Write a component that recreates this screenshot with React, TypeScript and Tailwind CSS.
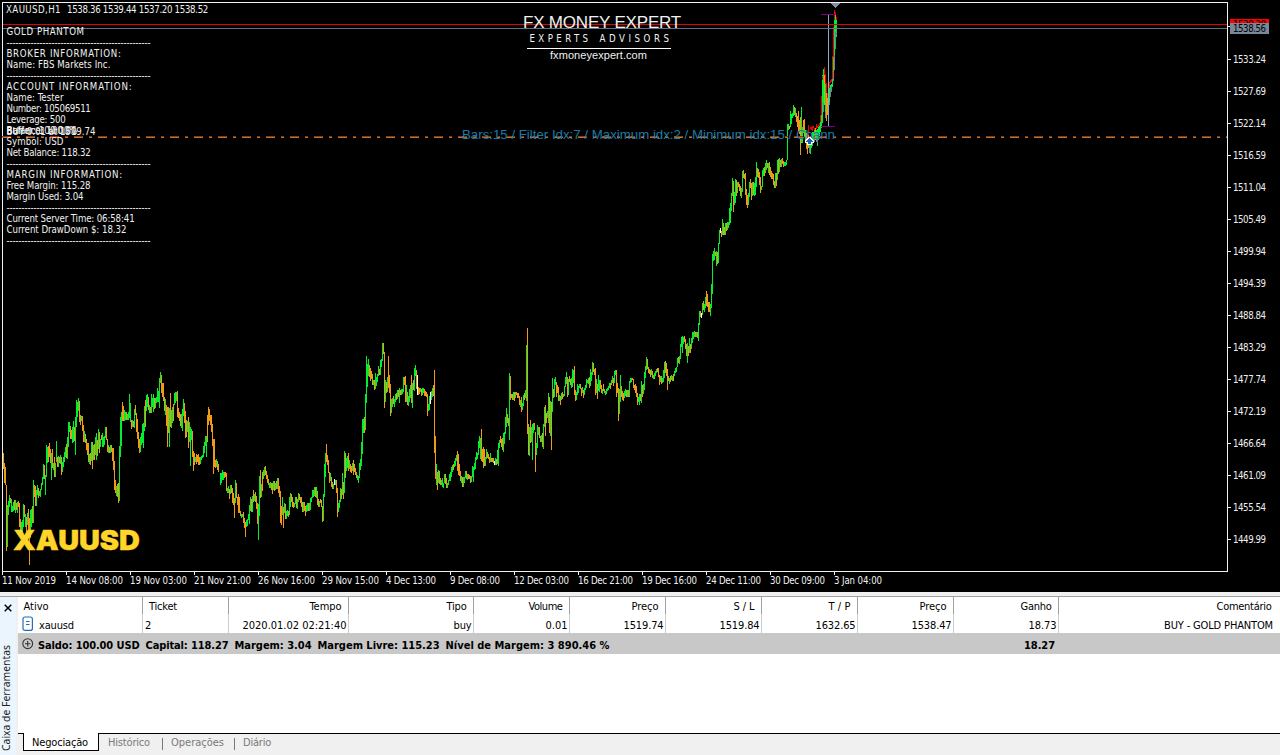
import { useLayoutEffect, useRef, useState } from "react";

const GREEN = "#00f030";
const ORANGE = "#f09a18";

/** Text whose tracking is adjusted so that it takes exactly `w` pixels. */
function Fit({ t, w, className = "" }: { t: string; w: number; className?: string }) {
  const ref = useRef<HTMLSpanElement>(null);
  const [ls, setLs] = useState(0);
  useLayoutEffect(() => {
    if (!ref.current) return;
    ref.current.style.letterSpacing = "0px";
    const natural = ref.current.getBoundingClientRect().width;
    const next = (w - natural) / t.length;
    ref.current.style.letterSpacing = next + "px";
    setLs(next);
  }, [t, w]);
  return (
    <span ref={ref} className={"inline-block self-start whitespace-pre " + className} style={{ letterSpacing: ls }}>
      {t}
    </span>
  );
}

/* Bars: colour, column, high, low, on a grid of thirds of a pixel. */
const series: { ox: number; oy: number; d: string }[] = [
  {
    ox: 0,
    oy: 360,
    d: `o10,279,326 o13,310,368 o16,321,375 o19,375,572 g22,435,560 g25,423,465 g28,405,440 o31,414,430 g34,416,455 g37,437,455 g40,425,452 o43,420,450 g46,420,458 o49,430,450 g52,425,458 o55,423,440 o58,430,500 o61,477,512 g64,487,520 g67,480,515 g70,432,500 o73,435,470 g76,462,500 o79,470,515 g82,458,495 o85,447,510 o88,475,614 g91,450,535 g94,447,500 o97,438,490 g100,360,490 o103,375,410 o106,378,437 g109,390,437 g112,375,405 o115,385,413 g118,393,408 g121,387,410 g124,368,390 g127,350,375 g130,312,358 o133,314,357 g136,345,405 g139,255,350 g142,262,308 o145,258,305 o148,249,290 o151,267,310 g154,280,360 o157,267,325 g160,310,330 o163,290,350 g166,308,350 g169,243,305 o172,290,320 g175,288,322 o178,290,308 g181,285,312 o184,290,345 g187,305,335 g190,290,320 g193,275,305 g196,262,290 o199,252,295 g202,232,296 g205,186,262 g208,186,215 o211,198,236 o214,210,236 g217,200,248 g220,184,245 o223,200,243 g226,170,284 g229,120,200 g232,125,172 g235,114,152 o238,122,185 o241,165,195 g244,168,182 o247,168,212 o250,195,247 g253,212,245 o256,222,250 o259,237,270 o262,250,284 o265,250,306 g268,282,312 o271,280,315 g274,247,303 o277,246,326 g280,255,300 o283,252,300 g286,232,284 g289,219,300 o292,240,288 g295,207,266 o298,217,280 g301,238,262 o304,225,240 g307,220,262 g310,232,262 g313,228,255 g316,201,235 o319,202,240 o322,237,275 g325,255,280 o328,262,280 g331,255,278 o334,255,276 o337,263,303 o340,264,330 o343,302,390 o346,360,400 g349,377,408 o352,372,410 o355,370,428 g358,258,422 g361,172,290 g364,155,258 o367,126,182 o370,137,183 g373,150,182 g376,157,180 o379,156,180 g382,162,180 g385,155,180 g388,102,175 g391,130,185 o394,180,208 g397,180,200 o400,182,202 g403,148,205 o406,136,165 o409,158,215 o412,178,236 o415,215,263 o418,237,280 g421,230,275 g424,218,255 g427,192,248 g430,190,265 g433,138,213 o436,120,200 g439,104,152 g442,103,140 o445,110,150 g448,135,160 o451,140,160 g454,102,158 g457,115,140 g460,102,155 o463,113,147 g466,115,145 g469,112,128 g472,85,125 g475,92,125 g478,55,143 g481,37,68 o484,45,98 o487,70,112 o490,70,122 o493,112,152 g496,118,165 o499,135,198 o502,142,262 o505,140,218 g508,145,262 o511,98,200 g514,150,204 g517,142,190 o520,132,182 g523,98,135 g526,97,130 g529,95,122 o532,93,172 o535,145,174 o538,155,182 o541,162,198 g544,162,203 g547,148,212 g550,117,167 o553,130,190 o556,152,233 o559,180,230 g562,182,215 o565,170,264 g568,187,245 g571,200,318 g574,208,240 o577,212,292 o580,272,333 o583,280,315 g586,290,305 o589,282,312 o592,284,306 o595,283,315 o598,292,315 g601,292,312 g604,287,300 g607,285,293 g610,258,291 g613,247,280 g616,228,258 g619,228,291 o622,164,247 o625,141,195 o628,147,183 o631,164,195 o634,165,217 o637,192,258 o640,237,341 o643,237,320 o646,300,325 g649,298,322 o652,302,330 o655,312,337 g661,340,375 g664,338,370 g667,330,360 g670,335,360 o673,337,355 o676,336,352 o679,338,392 g682,385,400 g685,378,400 o688,388,418 g691,376,402 o694,375,398 o697,385,430 o700,398,435 o703,413,474 g706,360,430 o709,370,415 o712,412,435 o715,402,460 o718,412,460`,
  },
  {
    ox: 220,
    oy: 330,
    d: `o61,543,558 g64,552,564 g67,552,560 o70,545,578 o73,565,595 o76,575,620 g79,570,590 g82,567,588 g85,552,570 g88,524,582 g91,502,542 o94,507,545 g97,498,545 o100,480,515 g103,492,512 o106,487,515 o109,498,537 o112,520,582 g115,522,629 g118,438,558 o121,420,505 g124,462,500 o127,426,482 g130,420,447 g133,412,437 o136,408,435 o139,422,447 o142,434,460 o145,447,465 g148,460,473 g151,457,473 o154,460,480 o157,458,492 g160,452,480 o163,452,482 g166,460,480 o169,453,478 g172,444,478 o175,444,490 o178,468,500 o181,484,580 o184,527,585 g187,500,555 o190,530,595 g193,520,550 o196,522,568 g199,542,567 g202,540,558 o205,542,562 g208,500,555 g211,488,530 o214,492,515 o217,500,530 o220,515,534 g223,518,530 g226,500,522 o229,500,533 g232,507,537 g235,489,515 o238,492,510 o241,500,518 o244,500,530 o247,515,545 g250,516,546 o253,516,542 o256,528,557 g259,524,546 g262,520,542 o265,520,542 g268,520,543 g271,503,540 g274,500,515 g277,480,504 g280,480,502 g283,471,498 o286,472,500 g289,472,505 o292,484,525 o295,507,532 g298,513,530 o301,507,520 o304,510,530 o307,528,576 g310,492,573 g313,402,502 g316,368,440 o319,342,395 o322,375,405 o325,390,430 o328,427,458 g331,428,453 o334,440,470 o337,455,477 g340,462,477 w343,447,465 g346,450,465 o349,450,488 o352,474,560 g355,520,545 g358,510,535 g361,475,517 o364,477,507 g367,430,495 o370,456,507 g373,363,490 o376,370,445 g379,383,423 g382,378,415 o385,370,423 g388,390,418 o391,402,425 o394,408,430 g397,398,422 o400,390,435 o403,402,425 o406,415,435 o409,425,445 g412,436,450 g415,437,458 g418,400,443 g421,387,420 g424,336,408 g427,268,372 g430,268,310 o433,262,310 g436,192,300 g439,78,218 g442,102,170 g445,86,138 o448,105,140 o451,115,152 o454,123,148 o457,132,164 g460,150,165 o463,150,180 g466,130,178 g469,140,168 g472,132,155 g475,108,138 o478,117,135 g481,90,135 g484,87,112 g487,39,92 o490,40,72 o493,66,234 g496,150,216 o499,155,190 g502,140,185 o505,78,175 o508,135,190 o511,162,258 g514,208,248 g517,205,230 o520,197,222 g523,208,232 g526,193,215 o529,190,210 g532,180,208 o535,180,200 g538,173,218 o541,180,195 g544,177,195 g547,177,193 g550,142,185 o553,140,165 o556,138,215 g559,165,215 o562,185,226 g565,198,228 g568,178,215 g571,165,205 o574,135,220 g577,158,234 o580,150,180 g583,115,183 g586,105,137 o589,120,178 w592,135,195 o595,172,195 o598,175,193 g601,173,187 o604,178,198 g607,175,195 g610,174,190 o613,177,197 o616,183,197 o619,187,200 o622,192,258 g625,222,243 g628,197,240 w631,185,222 g634,182,210 g637,174,200 o640,165,198 o643,120,368 o646,318,448 g649,402,465 o652,425,480 g655,420,458 o658,422,462 o661,445,465 g664,450,465 g667,445,472 g670,458,475 g673,432,460 o676,432,462 o679,445,473 g682,458,473 g685,450,465 g688,432,452 g691,427,453 g694,410,440 g697,405,425 o700,402,420 g703,392,410 g706,383,408 g709,375,392 o712,363,423 o715,372,435 o718,402,437`,
  },
  {
    ox: 420,
    oy: 310,
    d: `o121,483,512 g124,498,520 o127,500,530 g130,500,530 g133,500,518 g136,483,505 o139,483,508 g142,492,510 o145,492,508 o148,496,508 o151,498,518 g154,497,515 g157,468,500 g160,470,516 g163,458,480 g166,440,478 g169,426,450 g172,430,448 g175,392,435 g178,378,415 g181,384,448 o184,357,452 o187,417,455 o190,411,473 o193,416,468 g196,440,467 g199,417,448 o202,425,445 o205,432,448 o208,440,458 g211,430,455 o214,443,455 o217,444,457 o220,444,458 w223,453,465 g226,445,465 o229,448,465 g232,420,462 g235,400,467 g238,390,415 o241,378,400 o244,388,410 o247,385,420 g250,370,426 g253,365,402 g256,322,372 g259,294,350 o262,312,340 o265,323,348 g268,189,390 o271,198,270 o274,252,265 o277,253,270 g280,247,270 o283,245,273 g286,247,265 o289,246,255 o292,248,263 o295,248,264 o298,258,285 g301,270,290 o304,262,305 g307,278,300 g310,255,288 o313,248,270 g316,240,265 g319,105,272 o322,54,372 o325,342,435 g328,350,437 o331,330,400 g334,352,395 g337,343,450 g340,340,368 o343,339,360 o346,366,486 g349,400,435 g352,345,415 g355,352,375 o358,350,383 o361,378,395 g364,375,397 o367,369,412 g370,342,417 g373,290,352 o376,285,378 o379,308,340 g382,303,325 g385,249,340 o388,262,370 g391,272,378 o394,275,420 g397,204,305 o400,237,265 g403,207,260 g406,201,225 o409,216,262 o412,225,248 o415,232,272 g418,255,273 o421,258,285 g424,250,270 o427,246,267 g430,252,260 g433,228,258 g436,200,230 g439,186,222 o442,200,260 g445,207,255 o448,198,215 o451,206,225 g454,205,234 g457,177,232 g460,180,220 o463,168,255 o466,240,272 g469,245,270 g472,222,255 g475,228,250 g478,222,235 o481,222,237 o484,234,258 g487,232,250 o490,240,264 g493,234,255 g496,225,240 g499,208,235 g502,210,220 g505,203,222 o508,202,234 g511,177,228 g514,185,213 g517,156,195 o520,160,185 o523,177,195 o526,175,254 g529,207,248 o532,222,267 g535,195,243 g538,210,245 o541,210,237 o544,225,250 g547,237,252 o550,222,243 o553,237,250 g556,243,255 g559,237,252 g562,235,243 g565,228,240 g568,219,233 o571,219,237 g574,210,225 g577,198,220 o580,205,228 g583,183,220 g586,180,195 o589,180,260 o592,219,248 o595,235,333 g598,237,312 g601,195,275 o604,228,262 o607,243,270 o610,248,273 g613,243,265 g616,237,258 o619,240,262 g622,240,260 o625,240,262 g628,213,260 g631,205,218 g634,205,215 o637,204,210 o640,207,235 o643,225,240 o646,222,248 o649,228,262 o652,249,285 g655,262,275 g658,252,285 o661,252,273 g664,213,280 o667,225,262 g670,222,253 g673,186,240 g676,168,205 g679,141,180 o682,147,177 o685,172,190 o688,178,193 o691,180,200 g694,178,195 o697,182,203 g700,195,207 g703,190,207 g706,183,198 g709,178,190 o712,175,187 o715,173,200 o718,195,225`,
  },
  {
    ox: 620,
    oy: 140,
    d: `g121,708,725 o124,708,732 g127,715,730 g130,690,725 g133,665,713 o136,663,700 o139,670,708 o142,687,750 o145,708,722 g148,715,732 o151,708,725 g154,705,720 g157,708,722 o160,702,722 g163,692,708 g166,683,700 g169,680,695 g172,654,682 o175,651,670 g178,648,672 g181,612,658 g184,590,622 g187,588,640 g190,590,612 o193,588,607 o196,597,627 o199,612,648 g202,608,668 o205,618,648 g208,594,638 o211,612,640 g214,595,627 g217,577,608 g220,577,597 g223,573,590 o226,576,592 g229,576,590 o232,577,593 g235,548,603 g238,513,555 o241,513,530 w244,520,534 g247,490,525 o250,483,510 g253,492,516 g256,470,505 o259,453,497 o262,462,500 o265,486,515 o268,487,517 g271,492,528 g274,432,505 g277,342,462 g280,333,362 g283,324,360 o286,335,348 g289,333,378 o292,336,372 g295,308,370 g298,270,312 w301,264,278 o304,273,290 g307,237,285 o310,250,285 o313,262,285 g316,250,285 o319,250,273 g322,247,270 g325,245,265 g328,204,255 g331,190,250 g334,158,213 g337,114,168 o340,123,216 g343,155,195 g346,117,188 o349,120,168 g352,125,160 o355,125,140 o358,132,153 o361,138,167 g364,144,174 g367,93,157 o370,90,115 o373,103,117 o376,98,165 o379,147,195 o382,165,204 g385,160,195 g388,125,172 o391,117,145 o394,128,180 g397,126,168 o400,127,165 g403,130,168 g406,110,165 g409,66,140 o412,85,110 o415,87,115 o418,97,135 o421,110,158 g424,138,150 g427,90,142 g430,83,108 o433,80,107 g436,70,100 g439,60,90 o442,70,85 g445,70,98 o448,67,105 o451,80,112 o454,93,117 o457,100,117 o460,103,135 o463,122,143 g466,100,143 o469,100,137 g472,60,120 o475,57,102 g478,54,95 o481,60,80 g484,58,80 o487,54,72 o490,62,80 g493,66,78 g496,65,77 g499,60,75 g502,-48,60`,
  },
  {
    ox: 740,
    oy: 0,
    d: `g145,373,390 o148,377,388 g151,333,382 g154,342,372 g157,340,355 g160,315,348 o163,322,345 g166,323,350 o169,338,367 o172,348,380 o175,333,395 o178,360,402 o181,350,465 g184,322,430 g187,380,430 o190,360,400 o193,357,410 g196,390,420 o199,400,448 o202,400,462 o205,405,445 g208,420,455 g211,430,462 g214,400,445 g217,395,438 g220,395,425 g223,390,420 o226,385,420 g229,390,425 g232,388,438 g235,380,420 g238,378,410 g241,365,395 g244,330,385 s250,300,335 s256,335,355 r241,345,365 r244,288,345 r250,208,235 r256,222,255 r259,250,280 g247,225,370 g250,208,310 o253,222,315 g256,252,335 o259,278,362 o262,290,345 g265,285,330 g268,265,305 g271,255,270 g274,252,260 g277,225,260 g280,170,215 g283,60,165 g286,38,95 g289,55,110 r205,375,405 r211,381,388 r214,381,390 r217,378,392 r220,378,384 r223,384,390 r229,372,388 r232,378,384 r235,375,381 r238,370,378 r247,228,240 r253,201,225 r262,278,295 r265,258,290 r268,245,265 r271,240,250 r274,236,246 r277,168,238 r280,80,170 r283,30,60 r286,36,45 r289,50,60 s208,440,458 s223,405,425 s232,410,430 s229,415,425 s268,305,315 s271,270,290 s274,260,275 s280,215,242 s283,165,210 s286,95,146 s289,90,105`,
  },
];

const tint: Record<string, string> = { g: GREEN, o: ORANGE, w: "#ffffff", r: "#f00000", s: "#708090" };

const bars = series.flatMap(({ ox, oy, d }) =>
  d.split(" ").map((s) => {
    const [x, a, b] = s.slice(1).split(",").map(Number);
    const y0 = oy + Math.round(a / 3);
    const y1 = oy + Math.round(b / 3);
    return { x: ox + Math.floor(x / 3), y: y0, h: Math.max(1, y1 - y0), c: tint[s[0]] };
  }),
);

const prices = [
  "1533.24", "1527.69", "1522.14", "1516.59", "1511.04", "1505.49", "1499.94", "1494.39",
  "1488.84", "1483.29", "1477.74", "1472.19", "1466.64", "1461.09", "1455.54", "1449.99",
];

const times: [string, number][] = [
  ["11 Nov 2019", 54], ["14 Nov 08:00", 57], ["19 Nov 03:00", 57], ["21 Nov 21:00", 57],
  ["26 Nov 16:00", 57], ["29 Nov 15:00", 57], ["4 Dec 13:00", 50], ["9 Dec 08:00", 50],
  ["12 Dec 03:00", 55], ["16 Dec 21:00", 55], ["19 Dec 16:00", 55], ["24 Dec 11:00", 55],
  ["30 Dec 09:00", 55], ["3 Jan 04:00", 48],
];

const dashes = "-".repeat(48);
const info: [string, number][] = [
  ["GOLD PHANTOM", 78], [dashes, 144], ["BROKER INFORMATION:", 115], ["Name: FBS Markets Inc.", 104],
  [dashes, 144], ["ACCOUNT INFORMATION:", 126], ["Name: Tester", 57], ["Number: 105069511", 84],
  ["Leverage: 500", 59], ["Balance: 100.00", 70], ["Symbol: USD", 57], ["Net Balance: 118.32", 84],
  [dashes, 144], ["MARGIN INFORMATION:", 116.5], ["Free Margin: 115.28", 84], ["Margin Used: 3.04", 77],
  [dashes, 144], ["Current Server Time: 06:58:41", 128], ["Current DrawDown $: 18.32", 120], [dashes, 144],
];

function Chart() {
  return (
    <section className="relative h-[592px] w-full shrink-0 overflow-hidden bg-black text-[9.6px] text-[#f0f0f0]">
      <svg width="1280" height="592" viewBox="0 0 1280 592" className="block" shapeRendering="crispEdges">
        <path d="M2 2.5H1228M2.5 2V575M1227.5 2V572M2 571.5H1228" stroke="#f0f0f0" fill="none" />
        {prices.map((p, i) => (
          <g key={p}>
            <rect x="1228" y={59 + i * 32} width="3" height="1" fill="#f0f0f0" />
            <text x="1233" y={63 + i * 32} textLength="33" fill="#f0f0f0">{p}</text>
          </g>
        ))}
        {times.map(([t, w], i) => (
          <g key={t}>
            <rect x={2 + i * 64} y="572" width="1" height="3" fill="#f0f0f0" />
            <text x={2 + i * 64} y="584" textLength={w} fill="#f0f0f0">{t}</text>
          </g>
        ))}
        {bars.map((b, i) => (
          <rect key={i} x={b.x} y={b.y} width="1" height={b.h} fill={b.c} />
        ))}
        <path d="M828.5 14V126" stroke="#7eb0d0" />
        <path d="M821 14.5H835M821 126.5H835" stroke="#800080" />
        <path d="M831 3H840L835.5 8Z" fill="#8090a0" />
        <path d="M2 137.5H1227" stroke="#3cb043" strokeDasharray="9 6 3 6" />
        <path d="M2 136.5H1227" stroke="#ff0000" strokeDasharray="9 6 3 6" />
        <path d="M3 24.5H1227" stroke="#e60000" />
        <path d="M3 28.5H1227" stroke="#5f7480" />
        <rect x="1227" y="26" width="4" height="1" fill="#f0f0f0" />
        <rect x="1230" y="19" width="39" height="10" fill="#ff0000" />
        <text x="1233" y="28" textLength="33" fill="#000">1539.20</text>
        <rect x="1230" y="23" width="39" height="11" fill="#778899" />
        <text x="1233" y="32" textLength="33" fill="#000">1538.56</text>
        <text x="462" y="138.5" textLength="373" lengthAdjust="spacingAndGlyphs" fontSize="13" fill="#1c7ba6" className="font-['Liberation_Sans',sans-serif]">
          Bars:15 / Filter Idx:7 / Maximum idx:2 / Minimum idx:15 / Chann
        </text>
        <g fill="#fff">
          <rect x="808" y="137" width="3" height="1" />
          <rect x="807" y="138" width="5" height="1" />
          <rect x="806" y="139" width="7" height="1" />
          <rect x="805" y="140" width="9" height="3" />
          <rect x="807" y="143" width="5" height="2" />
        </g>
        <g fill="#1c5fb0">
          <rect x="809" y="138" width="1" height="1" />
          <rect x="808" y="139" width="3" height="5" />
          <rect x="807" y="140" width="5" height="1" />
          <rect x="806" y="141" width="7" height="1" />
        </g>
        <text
          x="13"
          y="550"
          textLength="127"
          lengthAdjust="spacingAndGlyphs"
          fontSize="27.5"
          fontWeight="900"
          fill="#ffd52a"
          stroke="#ffd52a"
          strokeWidth="0.4"
          className="font-['Inter',sans-serif]"
        >
          XAUUSD
        </text>
      </svg>

      <div className="absolute left-[6px] top-[4px] flex gap-[6px] leading-[11px]">
        <Fit t="XAUUSD,H1" w={55} />
        <Fit t="1538.36 1539.44 1537.20 1538.52" w={141} />
      </div>
      <div className="absolute left-[6.5px] top-[26px] flex flex-col">
        {info.map(([t, w], i) => (
          <div key={i} className="h-[11px] leading-[11px]">
            <Fit t={t} w={w} />
          </div>
        ))}
      </div>
      <div className="absolute left-[6.5px] top-[126px] leading-[11px]">
        <Fit t="BUY 0.01 at 1519.74" w={89} />
      </div>
      <div className="absolute left-[6.5px] top-[125px] leading-[11px]">
        <Fit t="Buffer: 100.00%" w={71} />
      </div>

      <div className="absolute left-[523px] top-[11px] flex w-[160px] flex-col font-['Liberation_Sans',sans-serif]">
        <Fit t="FX MONEY EXPERT" w={158} className="h-[21px] text-[17px] leading-[23px]" />
        <div className="ml-[6.5px] flex h-[16px] gap-[8px] font-['DejaVu_Sans_Condensed','DejaVu_Sans',sans-serif] text-[9.6px] leading-[14px]">
          <Fit t="EXPERTS" w={62} />
          <Fit t="ADVISORS" w={73} />
        </div>
        <div className="ml-[4px] h-px w-[144px] bg-white" />
        <Fit t="fxmoneyexpert.com" w={97} className="ml-[27px] text-[11px] leading-[13px]" />
      </div>
    </section>
  );
}

type Col = { w: string; h: string; hw: number; v: string; vw: number };
const cols: Col[] = [
  { w: "w-[120px]", h: "Tempo", hw: 32, v: "2020.01.02 02:21:40", vw: 104 },
  { w: "w-[125px]", h: "Tipo", hw: 20, v: "buy", vw: 18 },
  { w: "w-[96px]", h: "Volume", hw: 34, v: "0.01", vw: 22 },
  { w: "w-[96px]", h: "Preço", hw: 27, v: "1519.74", vw: 40 },
  { w: "w-[96px]", h: "S / L", hw: 21, v: "1519.84", vw: 40 },
  { w: "w-[96px]", h: "T / P", hw: 22, v: "1632.65", vw: 40 },
  { w: "w-[96px]", h: "Preço", hw: 27, v: "1538.47", vw: 40 },
  { w: "w-[105px]", h: "Ganho", hw: 31, v: "18.73", vw: 28 },
];

function Toolbox() {
  return (
    <section className="flex min-h-0 flex-1 flex-col bg-[#f0f0f0] pt-[4px] text-[11px] text-black">
      <div className="flex min-h-0 flex-1 border-t border-[#a0a0a0]">
        <aside className="flex w-[18px] shrink-0 flex-col items-center justify-between border-r-2 border-[#f0f0f0] bg-[#ebf5fe] pb-[4px] pt-[7px]">
          <svg width="8" height="8" viewBox="0 0 8 8">
            <path d="M.7 .7L7.3 7.3M7.3 .7L.7 7.3" stroke="#000" strokeWidth="1.5" />
          </svg>
          <span className="mr-[4px] h-[106px] rotate-180 whitespace-nowrap font-['Noto_Sans',sans-serif] text-[10.4px] leading-[12px] text-[#222] [writing-mode:vertical-rl]">
            Caixa de Ferramentas
          </span>
        </aside>
        <div className="flex min-w-0 flex-1 flex-col">
          <div className="flex h-[17px] shrink-0 bg-white leading-[20px]">
            <div className="w-[125px] border-r border-[#a0a0a0] pl-[5.5px]"><Fit t="Ativo" w={25} /></div>
            <div className="w-[86px] border-r border-[#a0a0a0] pl-[6px]"><Fit t="Ticket" w={28} /></div>
            {cols.map((c, i) => (
              <div key={i} className={c.w + " border-r border-[#a0a0a0] pr-[6.5px] text-right"}><Fit t={c.h} w={c.hw} /></div>
            ))}
            <div className="flex-1 pr-[8.5px] text-right"><Fit t="Comentário" w={55} /></div>
          </div>
          <div className="flex h-[19px] shrink-0 bg-white leading-[24px]">
            <div className="flex w-[125px] border-r border-[#cdcdcd] pl-[4px]">
              <svg width="12" height="16" viewBox="0 0 12 16" className="mr-[5px] mt-[2px]">
                <rect x="1" y="1" width="9.4" height="13.4" rx="2" fill="#fff" stroke="#1f6fb8" strokeWidth="1.2" />
                <path d="M4 5.5H7.5M4 8.5H7.5" stroke="#1f6fb8" />
              </svg>
              <Fit t="xauusd" w={35} />
            </div>
            <div className="w-[86px] border-r border-[#cdcdcd] pl-[2px]">2</div>
            {cols.map((c, i) => (
              <div key={i} className={c.w + " border-r border-[#cdcdcd] pr-[1.5px] text-right"}><Fit t={c.v} w={c.vw} /></div>
            ))}
            <div className="flex-1 pr-[7px] text-right"><Fit t="BUY - GOLD PHANTOM" w={109} /></div>
          </div>
          <div className="flex h-[21px] shrink-0 bg-[#c8c8c8] pl-[4px] font-bold leading-[25px]">
            <svg width="12" height="12" viewBox="0 0 12 12" className="mr-[4px] mt-[5px]">
              <circle cx="5.7" cy="5.7" r="4.9" fill="none" stroke="#333" strokeWidth="1.1" />
              <path d="M3 5.7H8.4M5.7 3V8.4" stroke="#333" strokeWidth="1.1" />
            </svg>
            <div className="flex w-[572px] gap-[6px]">
              <Fit t="Saldo: 100.00 USD" w={101.5} />
              <Fit t="Capital: 118.27" w={83} />
              <Fit t="Margem: 3.04" w={77} />
              <Fit t="Margem Livre: 115.23" w={122} />
              <Fit t="Nível de Margem: 3 890.46 %" w={164} />
            </div>
            <div className="flex-1 pr-[225px] text-right"><Fit t="18.27" w={31} /></div>
          </div>
          <div className="flex-1 bg-white" />
          <nav className="flex h-[22px] shrink-0 text-[#7a7a7a]">
            <div className="w-[5px] border-t border-black" />
            <div className="flex h-[18px] w-[76px] justify-center border-x border-b border-black bg-white pr-[2px] leading-[19px] text-black"><Fit t="Negociação" w={56} /></div>
            <div className="flex flex-1 items-start border-t border-black pl-[9px] leading-[18px]">
              <Fit t="Histórico" w={42} />
              <i className="ml-[12px] mr-[8px] mt-[4px] h-[12px] w-px bg-[#7a7a7a]" />
              <Fit t="Operações" w={53} />
              <i className="ml-[10px] mr-[8px] mt-[4px] h-[12px] w-px bg-[#7a7a7a]" />
              <Fit t="Diário" w={28} />
            </div>
          </nav>
        </div>
      </div>
    </section>
  );
}

export default function App() {
  return (
    <main className="flex h-[755px] w-[1280px] flex-col overflow-hidden font-['DejaVu_Sans_Condensed','DejaVu_Sans',sans-serif]">
      <Chart />
      <Toolbox />
    </main>
  );
}
